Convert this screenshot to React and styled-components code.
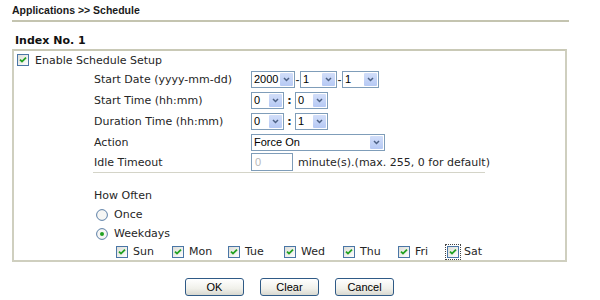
import React from "react";
import styled, { createGlobalStyle } from "styled-components";

const GlobalStyle = createGlobalStyle`
  html, body {
    margin: 0;
    padding: 0;
    background: #ffffff;
  }
  body {
    font-family: "DejaVu Sans", Verdana, sans-serif;
    font-size: 11px;
    color: #262626;
  }
`;

const days = [
  { name: "Sun", width: 56 },
  { name: "Mon", width: 56 },
  { name: "Tue", width: 56 },
  { name: "Wed", width: 59 },
  { name: "Thu", width: 55 },
  { name: "Fri", width: 49 },
  { name: "Sat", width: 40, focused: true },
];

const CheckBox = ({ checked = true }) => (
  <svg width="12" height="12" viewBox="0 0 12 12">
    <defs>
      <linearGradient id="cbg" x1="0" y1="0" x2="1" y2="1">
        <stop offset="0" stopColor="#dcdcd6" />
        <stop offset="1" stopColor="#ffffff" />
      </linearGradient>
    </defs>
    <rect x="0.5" y="0.5" width="11" height="11" fill="url(#cbg)" stroke="#4a76a6" />
    {checked && (
      <path d="M3 5.6 L5 7.6 L9 3.6" fill="none" stroke="#21a121" strokeWidth="1.8" />
    )}
  </svg>
);

const Radio = ({ checked }) => (
  <svg width="12" height="12" viewBox="0 0 12 12">
    <circle cx="6" cy="6" r="5.4" fill="#f6f6f4" stroke="#5a7ea6" strokeWidth="1" />
    {checked && <circle cx="6" cy="6" r="2" fill="#21a121" />}
  </svg>
);

const Select = ({ value, width }) => (
  <SelectBox style={{ width }}>
    <SelectValue>{value}</SelectValue>
    <SelectArrow>
      <svg width="7" height="5" viewBox="0 0 7 5">
        <path d="M1 1 L3.5 3.5 L6 1" fill="none" stroke="#4d6185" strokeWidth="1.5" />
      </svg>
    </SelectArrow>
  </SelectBox>
);

const App = () => {
  return (
    <Page>
      <GlobalStyle />
      <Breadcrumb>Applications &gt;&gt; Schedule</Breadcrumb>
      <SectionTitle>Index No. 1</SectionTitle>
      <Panel>
        <EnableRow>
          <CheckBox />
          <span>Enable Schedule Setup</span>
        </EnableRow>

        <FormRow h={21}>
          <Label>Start Date (yyyy-mm-dd)</Label>
          <Controls>
            <Select value="2000" width={44} />
            <Sep>-</Sep>
            <Select value="1" width={37} />
            <Sep>-</Sep>
            <Select value="1" width={37} />
          </Controls>
        </FormRow>
        <FormRow h={21}>
          <Label>Start Time (hh:mm)</Label>
          <Controls>
            <Select value="0" width={33} />
            <Colon>:</Colon>
            <Select value="0" width={33} />
          </Controls>
        </FormRow>
        <FormRow h={21}>
          <Label>Duration Time (hh:mm)</Label>
          <Controls>
            <Select value="0" width={33} />
            <Colon>:</Colon>
            <Select value="1" width={33} />
          </Controls>
        </FormRow>
        <FormRow h={20}>
          <Label>Action</Label>
          <Controls>
            <Select value="Force On" width={134} />
          </Controls>
        </FormRow>
        <FormRow h={20}>
          <Label>Idle Timeout</Label>
          <Controls>
            <TextBox>0</TextBox>
            <Hint>minute(s).(max. 255, 0 for default)</Hint>
          </Controls>
        </FormRow>

        <InnerRule />

        <OftenBlock>
          <OftenTitle>How Often</OftenTitle>
          <RadioRow>
            <Radio />
            <span>Once</span>
          </RadioRow>
          <RadioRow>
            <Radio checked />
            <span>Weekdays</span>
          </RadioRow>
          <DaysRow>
            {days.map((d) => (
              <DayItem key={d.name} style={{ width: d.width }}>
                <DayBox focused={d.focused}>
                  <CheckBox />
                </DayBox>
                <span>{d.name}</span>
              </DayItem>
            ))}
          </DaysRow>
        </OftenBlock>
      </Panel>

      <ButtonBar>
        <Button>OK</Button>
        <Button>Clear</Button>
        <Button>Cancel</Button>
      </ButtonBar>
    </Page>
  );
};

export default App;

const Page = styled.div`
  width: 557px;
  padding: 0 0 0 12px;
`;

const Breadcrumb = styled.div`
  height: 20px;
  line-height: 20px;
  font-family: "Liberation Sans", Arial, sans-serif;
  font-weight: 700;
  font-size: 10.5px;
  color: #1a1a1a;
  border-bottom: 2px solid #c4c4b0;
`;

const SectionTitle = styled.div`
  margin-top: 10px;
  padding-left: 3px;
  height: 17px;
  line-height: 17px;
  font-weight: 700;
  font-size: 11px;
  color: #111111;
`;

const Panel = styled.div`
  width: 551px;
  border: 2px solid #cfcfbf;
  border-top-color: #c9c9b6;
`;

const EnableRow = styled.div`
  height: 18px;
  display: flex;
  align-items: center;
  gap: 6px;
  padding-left: 3px;
`;

const FormRow = styled.div`
  height: ${({ h }) => h}px;
  display: flex;
  align-items: center;
  padding-left: 80px;
`;

const Label = styled.div`
  width: 157px;
  flex-shrink: 0;
`;

const Controls = styled.div`
  display: flex;
  align-items: center;
`;

const SelectBox = styled.div`
  height: 17px;
  box-sizing: border-box;
  border: 1px solid #7f9db9;
  background: #ffffff;
  display: flex;
  align-items: stretch;
  font-family: "Liberation Sans", Arial, sans-serif;
  font-size: 11px;
  color: #000000;
`;

const SelectValue = styled.div`
  flex: 1;
  padding-left: 2px;
  line-height: 15px;
  overflow: hidden;
  white-space: nowrap;
`;

const SelectArrow = styled.div`
  width: 13px;
  margin: 1px;
  border-radius: 1px;
  background: linear-gradient(#d2def9, #b6c9f4);
  display: flex;
  align-items: center;
  justify-content: center;
`;

const Sep = styled.span`
  width: 5px;
  text-align: center;
  font-family: "Liberation Sans", Arial, sans-serif;
  font-size: 12px;
`;

const Colon = styled.span`
  width: 11px;
  text-align: center;
  font-weight: 700;
  font-size: 11px;
`;

const TextBox = styled.div`
  width: 42px;
  height: 18px;
  box-sizing: border-box;
  border: 1px solid #7f9db9;
  padding-left: 3px;
  line-height: 16px;
  font-family: "Liberation Sans", Arial, sans-serif;
  font-size: 11px;
  color: #b8b8b8;
`;

const Hint = styled.span`
  margin-left: 5px;
`;

const InnerRule = styled.div`
  margin-left: 79px;
  width: 392px;
  border-top: 1px solid #d4d4c8;
`;

const OftenBlock = styled.div`
  padding-top: 13px;
  padding-left: 80px;
`;

const OftenTitle = styled.div`
  height: 19px;
  line-height: 19px;
`;

const RadioRow = styled.div`
  height: 19px;
  display: flex;
  align-items: center;
  gap: 6px;
  padding-left: 2px;
`;

const DaysRow = styled.div`
  height: 17px;
  display: flex;
  align-items: center;
  padding-left: 22px;
`;

const DayItem = styled.div`
  display: flex;
  align-items: center;
  gap: 5px;
  flex-shrink: 0;
`;

const DayBox = styled.div`
  display: flex;
  padding: 1px;
  margin: -2px;
  border: 1px dotted ${({ focused }) => (focused ? "#444444" : "transparent")};
`;

const ButtonBar = styled.div`
  width: 555px;
  margin-top: 16px;
  display: flex;
  justify-content: center;
  gap: 16px;
`;

const Button = styled.button`
  width: 59px;
  height: 18px;
  padding: 0;
  border: 1px solid #2f5a86;
  border-radius: 3px;
  background: linear-gradient(#ffffff, #f0f0ea 60%, #d8d8d0);
  font-family: "Liberation Sans", Arial, sans-serif;
  font-size: 11px;
  color: #000000;
`;
